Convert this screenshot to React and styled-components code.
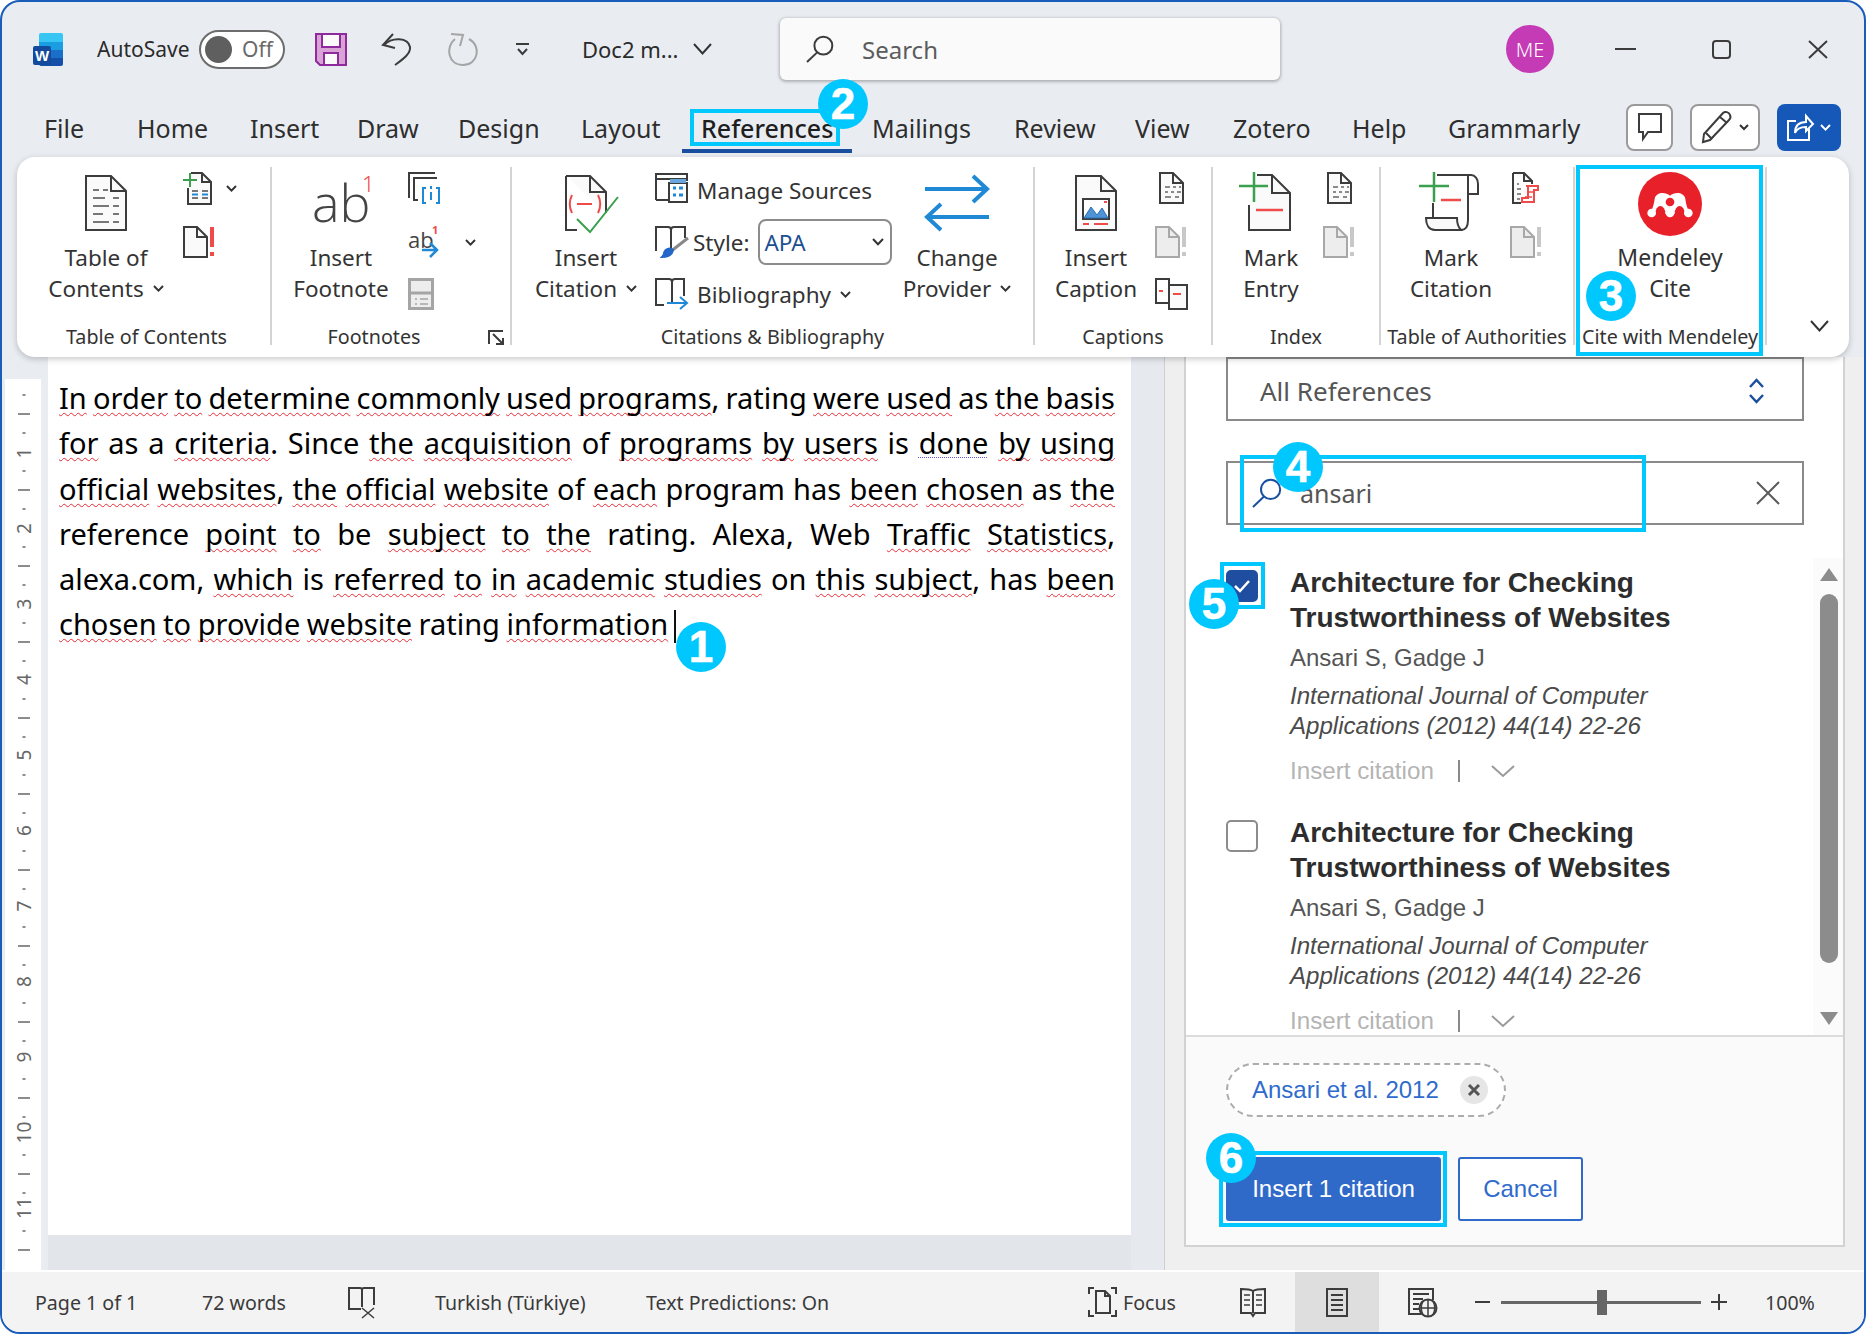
import React from 'react'
import styled, { createGlobalStyle } from 'styled-components'

const ink = '#3c3c3c'
const cyan = '#00c8ff'
const blue = '#2089d6'
const red = '#ef4b4b'
const green = '#3aa04e'

const GlobalStyle = createGlobalStyle`
  html, body { margin: 0; padding: 0; background: #fff; }
  * { box-sizing: border-box; }
`

const Stage = styled.div`
  position: relative;
  width: 1866px;
  height: 1334px;
  overflow: hidden;
  font-family: "Noto Sans", "Open Sans", sans-serif;
  color: #2b2b2b;
`

const Window = styled.div`
  display: flex;
  flex-direction: column;
  width: 100%;
  height: 100%;
  border: 2px solid #1a5cba;
  border-radius: 20px;
  overflow: hidden;
  background: #e9edf2;
`

const Cell = styled.div`
  display: flex;
  flex: none;
  align-items: center;
  margin-left: ${p => p.$ml || 0}px;
  width: ${p => (p.$w ? `${p.$w}px` : 'auto')};
  white-space: nowrap;
`

const TitleBar = styled.div`
  display: flex;
  flex: none;
  align-items: center;
  height: 96px;
  padding-bottom: 2px;
  font-size: 21px;
`

const Toggle = styled.div`
  display: flex;
  align-items: center;
  width: 86px;
  height: 39px;
  padding-left: 4px;
  border: 2px solid #6c6c6c;
  border-radius: 20px;
  background: #fff;
  font-size: 21px;
  color: #6a6a6a;
`

const Knob = styled.span`
  width: 27px;
  height: 27px;
  margin-right: 10px;
  border-radius: 50%;
  background: #5f5f5f;
`

const DocName = styled.span`
  font-size: 22px;
`

const SearchBox = styled.div`
  display: flex;
  align-items: center;
  width: 500px;
  height: 62px;
  padding-left: 26px;
  border-radius: 6px;
  background: #fafafa;
  box-shadow: 0 1px 3px 1px rgba(0, 0, 0, 0.25);
  font-size: 24px;
  color: #5c5c5c;
`

const SearchText = styled.span`
  margin-left: 28px;
`

const Avatar = styled.div`
  display: flex;
  align-items: center;
  justify-content: center;
  width: 48px;
  height: 48px;
  border-radius: 50%;
  background: #c43bb5;
  color: #fff;
  font-size: 20px;
  font-weight: 300;
`

const TabRow = styled.div`
  display: flex;
  flex: none;
  align-items: center;
  height: 59px;
  padding: 0 23px 0 42px;
`

const Tab = styled.div`
  position: relative;
  flex: none;
  width: ${p => p.$w}px;
  font-size: 25px;
  line-height: 36px;
  font-weight: ${p => (p.$active ? 500 : 400)};
  color: ${p => (p.$active ? '#1e1e1e' : '#2e2e2e')};

  ${p => p.$active && `
    &::after {
      content: "";
      position: absolute;
      left: -19px;
      width: 170px;
      top: calc(100% + 3px);
      height: 4px;
      background: #1a4fa0;
    }
  `}
`

const TabActions = styled.div`
  display: flex;
  gap: 17px;
  margin: -1px 0 0 auto;
`

const ActionButton = styled.div`
  display: flex;
  align-items: center;
  justify-content: center;
  gap: 7px;
  width: ${p => p.$w}px;
  height: 47px;
  border: ${p => (p.$primary ? 'none' : '2px solid #9a9a9a')};
  border-radius: 8px;
  background: ${p => (p.$primary ? '#1558b8' : '#fff')};
`

const Ribbon = styled.div`
  position: relative;
  z-index: 2;
  display: flex;
  flex: none;
  height: 200px;
  margin: 0 15px;
  padding: 10px 0 12px;
  border-radius: 18px;
  background: #fff;
  box-shadow: 0 2px 6px rgba(0, 0, 0, 0.22);
`

const Group = styled.div`
  display: grid;
  grid-template-rows: 1fr 26px;
  flex: none;
  width: ${p => p.$w}px;
  border-right: ${p => (p.$plain ? 'none' : '2px solid #d4d4d4')};
`

const GroupBody = styled.div`
  display: flex;
  padding-left: ${p => p.$pl || 0}px;
`

const GroupLabel = styled.div`
  position: relative;
  height: 26px;
  margin: 5px 0 -5px;
  padding: 0 ${p => p.$pr || 0}px 0 ${p => p.$pl || 0}px;
  font-size: 19.7px;
  line-height: 26px;
  text-align: center;
  white-space: nowrap;
  color: #333;
`

const Launcher = styled.span`
  position: absolute;
  right: 6px;
  bottom: 5px;
`

const BigButton = styled.div`
  display: flex;
  flex: none;
  flex-direction: column;
  align-items: center;
  width: ${p => p.$w}px;
  padding-top: 8px;
`

const BigIcon = styled.div`
  display: flex;
  justify-content: center;
  height: 67px;
  margin-left: ${p => p.$shift || 0}px;
  margin-top: ${p => p.$lift || 0}px;
  margin-bottom: ${p => -(p.$lift || 0)}px;
`

const BigLabel = styled.div`
  display: flex;
  align-items: center;
  gap: 9px;
  font-size: 22.5px;
  line-height: 31px;
  white-space: nowrap;
  color: #333;
`

const SmallColumn = styled.div`
  display: grid;
  grid-template-rows: 42px 66px 38px;
  flex: none;
  width: ${p => p.$w}px;
  padding-left: ${p => p.$pl || 0}px;
`

const SmallRow = styled.div`
  display: flex;
  align-items: center;
  justify-content: ${p => (p.$center ? 'center' : 'flex-start')};
  gap: ${p => p.$gap || 0}px;
  font-size: 22.5px;
  white-space: nowrap;
  color: #333;
`

const ManageLabel = styled.span`
  margin-top: 4px;
`

const StyleSelect = styled.div`
  display: flex;
  align-items: center;
  justify-content: space-between;
  width: 134px;
  height: 46px;
  margin-left: 5px;
  padding: 0 6px 0 4px;
  border: 2px solid #8c8c8c;
  border-radius: 8px;
  font-size: 22.5px;
  color: #1c4f91;
`

const LogoLabel = styled.span`
  font-size: 23px;
`

const RibbonCollapse = styled.div`
  display: flex;
  align-items: flex-end;
  justify-content: center;
  flex: 1;
  padding: 0 0 14px 22px;
`

const Content = styled.div`
  display: flex;
  flex: 1;
  min-height: 0;
`

const RulerStrip = styled.div`
  flex: none;
  width: 46px;
  padding: 22px 7px 0 3px;
  background: #e9edf2;
`

const RulerBody = styled.div`
  height: 100%;
  background: #fff;
`

const DocColumn = styled.div`
  display: flex;
  flex: none;
  flex-direction: column;
  width: 1083px;
`

const Page = styled.div`
  flex: 1;
  padding: 18px 16px 0 11px;
  background: #fff;
`

const PageFoot = styled.div`
  flex: none;
  height: 35px;
  background: #e2e5ea;
`

const Line = styled.div`
  height: 45.3px;
  font-family: "Noto Sans", sans-serif;
  font-size: 29px;
  line-height: 45.3px;
  word-spacing: ${p => (p.$last ? -1 : -3)}px;
  white-space: nowrap;
  text-align: justify;
  text-align-last: ${p => (p.$last ? 'left' : 'justify')};
  color: #000;
`

const Word = styled.span`
  text-decoration: ${p => (p.$mark === '~' ? 'underline wavy #ea2b35' : p.$mark === '^' ? 'underline dotted #6a5acd' : 'none')};
  text-decoration-thickness: 1.4px;
  text-underline-offset: 3px;
  text-decoration-skip-ink: none;
`

const Caret = styled.span`
  display: inline-block;
  width: 2px;
  height: 33px;
  margin-left: 6px;
  vertical-align: -8px;
  background: #111;
`

const Gutter = styled.div`
  flex: none;
  width: 34px;
  background: #e6e9ee;
  border-right: 1px solid #cfcfcf;
`

const Side = styled.div`
  display: flex;
  flex: 1;
  min-width: 0;
  padding: 0 19px 23px 19px;
  background: #efefef;
`

const Panel = styled.div`
  display: flex;
  flex-direction: column;
  width: 661px;
  border: solid #d2d2d2;
  border-width: 0 2px 2px 2px;
  background: #fff;
  font-family: "Liberation Sans", Arial, sans-serif;
`

const Filters = styled.div`
  flex: none;
  padding: 0 39px 0 40px;
`

const FilterBox = styled.div`
  display: flex;
  align-items: center;
  justify-content: space-between;
  height: 64px;
  margin-bottom: 40px;
  padding: ${p => (p.$search ? '0 22px 0 24px' : '3px 37px 0 32px')};
  border: 2px solid #8a8a8a;
  font-family: "Noto Sans", sans-serif;
  font-size: 26px;
  color: #555;

  &:last-child {
    margin-bottom: 0;
    font-size: 25px;
  }
`

const SearchValue = styled.div`
  display: flex;
  align-items: center;
  gap: 18px;
`

const ListArea = styled.div`
  display: flex;
  flex: 1;
  min-height: 0;
  margin-top: 33px;
  overflow: hidden;
`

const Items = styled.div`
  flex: 1;
  padding: 7px 0 0 40px;
`

const Item = styled.div`
  display: grid;
  grid-template-columns: 64px 1fr;
  height: 250px;
`

const CheckBox = styled.div`
  display: flex;
  align-items: center;
  justify-content: center;
  width: 32px;
  height: 32px;
  margin-top: 5px;
  border: 2px solid ${p => (p.$on ? '#1f4ea1' : '#8c8c8c')};
  border-radius: 5px;
  background: ${p => (p.$on ? '#1f4ea1' : '#fff')};
`

const ItemTitle = styled.div`
  font-size: 28px;
  line-height: 35px;
  font-weight: 700;
  color: #2d2d2d;
`

const ItemAuthors = styled.div`
  margin-top: 8px;
  font-size: 24px;
  line-height: 30px;
  color: #555;
`

const ItemJournal = styled.div`
  margin-top: 8px;
  font-size: 24.1px;
  line-height: 30px;
  font-style: italic;
  color: #4a4a4a;
`

const ItemActions = styled.div`
  display: flex;
  align-items: center;
  height: 30px;
  margin-top: 15px;
  font-size: 24.2px;
  color: #b4b4b4;
`

const ActionRule = styled.span`
  width: 2px;
  height: 22px;
  margin: 0 31px 0 24px;
  background: #8a8a8a;
`

const ScrollTrack = styled.div`
  display: flex;
  flex: none;
  flex-direction: column;
  width: 30px;
  padding: 10px 5px 10px 7px;
  background: #fbfbfb;
`

const ScrollThumb = styled.div`
  height: 369px;
  margin-top: 13px;
  border-radius: 9px;
  background: #8c8c8c;
`

const ScrollDown = styled.div`
  margin-top: auto;
`

const Footer = styled.div`
  flex: none;
  height: 210px;
  padding: 26px 40px;
  border-top: 2px solid #dcdcdc;
  background: #fafafa;
`

const Chip = styled.div`
  display: flex;
  align-items: center;
  justify-content: space-between;
  width: 280px;
  height: 54px;
  padding: 0 16px 0 24px;
  border: 2px dashed #acacac;
  border-radius: 27px;
  background: #fff;
  font-size: 24px;
  color: #2f6bcc;
`

const ChipClose = styled.span`
  display: flex;
  align-items: center;
  justify-content: center;
  width: 28px;
  height: 28px;
  border-radius: 50%;
  background: #e6e6e6;
`

const FooterActions = styled.div`
  display: flex;
  gap: 17px;
  margin-top: 40px;
`

const Button = styled.div`
  display: flex;
  align-items: center;
  justify-content: center;
  width: ${p => p.$w}px;
  height: 64px;
  border: 2px solid #306ac9;
  border-radius: 3px;
  background: ${p => (p.$primary ? '#306ac9' : '#fff')};
  color: ${p => (p.$primary ? '#fff' : '#2f6bcc')};
  font-size: 24px;
`

const StatusBar = styled.div`
  display: flex;
  flex: none;
  align-items: stretch;
  height: 62px;
  border-top: 2px solid #fff;
  background: #f3f3f3;
  font-size: 19.6px;
  color: #3a3a3a;
`

const ViewActive = styled(Cell)`
  justify-content: center;
  background: #dedede;
`

const ZoomSlider = styled.div`
  position: relative;
  align-self: center;
  width: 200px;
  height: 3px;
  background: #666;
`

const ZoomThumb = styled.span`
  position: absolute;
  left: 96px;
  top: -11px;
  width: 10px;
  height: 25px;
  background: #666;
`

const Highlight = styled.div`
  position: absolute;
  z-index: 5;
  left: ${p => p.$x}px;
  top: ${p => p.$y}px;
  width: ${p => p.$w}px;
  height: ${p => p.$h}px;
  border: 4px solid ${cyan};
`

const Badge = styled.div`
  position: absolute;
  z-index: 6;
  left: ${p => p.$x - 25}px;
  top: ${p => p.$y - 25}px;
  display: flex;
  align-items: center;
  justify-content: center;
  width: 50px;
  height: 50px;
  border-radius: 50%;
  background: ${cyan};
  color: #fff;
  font-family: "Liberation Sans", Arial, sans-serif;
  font-size: 44px;
  font-weight: 700;
  -webkit-text-stroke: 0.6px #fff;
`

const Glyph = styled.svg`
  display: block;
  flex: none;
  overflow: visible;
`

const Ico = ({ w, h, color = ink, sw = 2, children }) => (
  <Glyph width={w} height={h} viewBox={`0 0 ${w} ${h}`} fill="none" stroke={color} strokeWidth={sw}>
    {children}
  </Glyph>
)

const Chev = ({ w = 12, color = '#333', sw = 2 }) => (
  <Ico w={w} h={w * 0.6} color={color} sw={sw}>
    <path d={`M1 1L${w / 2} ${w * 0.6 - 1}L${w - 1} 1`} />
  </Ico>
)

const WordLogo = () => (
  <Glyph width="30" height="33" viewBox="0 0 30 33">
    <path d="M6 2C6 .9 6.900 0 8 0h20c1 0 2 .9 2 2v7H6z" fill="#37c6f4" />
    <rect x="6" y="9" width="24" height="8" fill="#1b9de2" />
    <rect x="6" y="17" width="24" height="8" fill="#1a6fc9" />
    <path d="M6 25h24v6c0 1-1 2-2 2H8c-1 0-2-1-2-2z" fill="#144fa8" />
    <rect x="0" y="13" width="18" height="19" rx="2" fill="#134a9e" />
    <text x="9" y="28" textAnchor="middle" fontFamily="Liberation Sans" fontSize="15" fontWeight="700" fill="#fff">W</text>
  </Glyph>
)

const SaveIcon = () => (
  <Ico w={32} h={33} color="#8e2a9e">
    <path d="M1 1H31V32H5L1 28Z" fill="#d9a3d6" />
    <rect x="7" y="1" width="18" height="13" fill="#fafafa" />
    <rect x="9" y="20" width="14" height="12" fill="#fafafa" />
  </Ico>
)

const UndoIcon = () => (
  <Ico w={30} h={32}>
    <path d="M11 1L1 12L13 15" />
    <path d="M2 12C10 4 26 4 28 14C29 21 20 27 13 32" />
  </Ico>
)

const RedoIcon = () => (
  <Ico w={33} h={33} color="#a5a5a5">
    <path d="M8 6C-2 14 1 32 16 32C31 32 35 13 22 6" />
    <path d="M4 1L16 2L13 13" />
  </Ico>
)

const QatMore = () => (
  <Ico w={15} h={13}>
    <path d="M1 1H14" />
    <path d="M3 6L7.500 11L12 6" />
  </Ico>
)

const SearchGlass = ({ color = ink, w = 28 }) => (
  <Ico w={w} h={w} color={color}>
    <circle cx={w * 0.62} cy={w * 0.38} r={w * 0.32} />
    <path d={`M${w * 0.4} ${w * 0.62}L1 ${w - 1}`} />
  </Ico>
)

const MinIcon = () => <Ico w={21} h={4}><path d="M0 2H21" /></Ico>

const MaxIcon = () => <Ico w={19} h={19}><rect x="1" y="1" width="17" height="17" rx="3" /></Ico>

const CloseIcon = () => <Ico w={20} h={19}><path d="M1 1L19 18M19 1L1 18" /></Ico>

const CommentIcon = () => (
  <Ico w={24} h={28}>
    <path d="M1 1H23V19H10L5 26V19H1Z" />
  </Ico>
)

const PencilIcon = () => (
  <Ico w={30} h={32}>
    <path d="M2 23L21 2C23 0 27 1 28 4C29 6 28 8 27 9L8 29L1 31Z" />
    <path d="M18 6L25 12M4 22L10 28" />
  </Ico>
)

const ShareIcon = () => (
  <Ico w={26} h={28} color="#fff">
    <path d="M9 8H1V27H22V16" />
    <path d="M8 20C8 12 13 9 19 9V3L26 11L19 18V14C14 14 10 15 8 20Z" />
  </Ico>
)

const TocIcon = () => (
  <Ico w={42} h={56}>
    <path d="M1 1H26L41 16V55H1Z" fill="#fafafa" />
    <path d="M26 1V16H41" />
    <path d="M8 15H14M18 15H23M8 23H20M28 23H34M8 31H24M28 31H34M8 39H18M28 39H34M8 47H24M28 47H34" stroke="#777" />
  </Ico>
)

const AddTextIcon = () => (
  <Ico w={29} h={33}>
    <path d="M8 1H19L28 10V32H5V16" fill="#fafafa" />
    <path d="M19 1V10H28" />
    <path d="M9 19H15M19 19H25M9 26H15M19 26H25" stroke="#777" />
    <path d="M9 22.500H15M19 22.500H25" stroke={blue} />
    <path d="M7 1V15M0 8H14" stroke={green} />
  </Ico>
)

const BangIcon = ({ color = ink, bang = red, fill = '#fafafa' }) => (
  <Ico w={32} h={32} color={color}>
    <path d="M1 1H14L24 11V31H1Z" fill={fill} />
    <path d="M14 1V11H24" />
    <path d="M29 1V21" stroke={bang} strokeWidth="4" />
    <path d="M29 26V30" stroke={bang} strokeWidth="4" />
  </Ico>
)

const AbIcon = () => (
  <Glyph width="62" height="60" viewBox="0 0 62 60">
    <text x="2" y="47" fontFamily="Open Sans" fontWeight="300" fontSize="52" fill="#444">ab</text>
    <text x="52" y="17" fontFamily="Noto Sans" fontWeight="300" fontSize="22" fill={red}>1</text>
  </Glyph>
)

const CrossRefIcon = () => (
  <Ico w={33} h={32}>
    <path d="M27 1H1V26" />
    <path d="M29 6H6V28H10" />
    <path d="M18 16H15V31H18M28 16H31V31H28" stroke={blue} />
    <path d="M23 14V17M23 20V28" stroke={blue} />
  </Ico>
)

const NextNoteIcon = () => (
  <Glyph width="32" height="32" viewBox="0 0 32 32">
    <text x="0" y="22" fontFamily="Open Sans" fontSize="22" fill="#444">ab</text>
    <text x="24" y="8" fontFamily="Noto Sans" fontSize="11" fontWeight="700" fill={red}>1</text>
    <path d="M14 24H29M22 17L29 24L22 31" fill="none" stroke={blue} strokeWidth="2.500" />
  </Glyph>
)

const ShowNotesIcon = () => (
  <Ico w={26} h={32} color="#a5a5a5" sw={3}>
    <rect x="1.500" y="1.500" width="23" height="29" fill="#ededed" />
    <path d="M1 15H25" />
    <path d="M7 21H9M12 21H20M7 26H9M12 26H20" strokeWidth="1.500" />
  </Ico>
)

const LauncherIcon = () => (
  <Ico w={16} h={15} sw={2}>
    <path d="M1 14V1H15" />
    <path d="M5 4L15 14M8 14H15V8" />
  </Ico>
)

const InsertCitationIcon = () => (
  <Ico w={55} h={58}>
    <path d="M1 1H25L41 17V38" fill="#fafafa" />
    <path d="M25 1V17H41" />
    <path d="M1 1V55H12" />
    <path d="M7 20C4 26 4 32 7 38M33 20C36 26 36 32 33 38" stroke={red} />
    <path d="M12 29H27" stroke={red} />
    <path d="M12 44L25 57L53 22" stroke={green} />
  </Ico>
)

const ManageIcon = () => (
  <Ico w={33} h={30}>
    <path d="M1 27V1H32V8M1 6H32M1 27H14" />
    <rect x="14" y="10" width="18" height="19" />
    <rect x="15" y="6" width="16" height="4" fill="#6aa6de" stroke="none" />
    <path d="M18 15H21M24 15H28M18 22H21M24 22H28" stroke={blue} strokeWidth="3" />
  </Ico>
)

const StyleIcon = () => (
  <Ico w={34} h={32}>
    <path d="M1 25V1H13C15 1 16 2 16 4V22M16 4C16 2 17 1 19 1H30V12" />
    <path d="M33 12L15 26" stroke="#888" strokeWidth="3" />
    <path d="M7 31C12 31 17 29 18 24C15 21 10 23 9 27C9 29 8 30 7 31Z" fill="#2467c9" stroke="#2467c9" />
  </Ico>
)

const BibliographyIcon = () => (
  <Ico w={33} h={32}>
    <path d="M9 27H1V1H14C16 1 17 2 17 4V24M17 4C17 2 18 1 20 1H29V18" />
    <path d="M12 25H31M25 19L32 25L25 31" stroke={blue} />
  </Ico>
)

const ProviderIcon = () => (
  <Ico w={64} h={56} color={blue} sw={4}>
    <path d="M0 14H62M48 1L62 14L48 27" />
    <path d="M64 42H2M16 29L2 42L16 55" />
  </Ico>
)

const CaptionIcon = () => (
  <Ico w={42} h={56}>
    <path d="M1 1H26L41 16V55H1Z" fill="#fafafa" />
    <path d="M26 1V16H41" />
    <rect x="8" y="24" width="26" height="20" stroke="#3c3c3c" fill="#fff" />
    <path d="M9 43L16 32L22 40L27 33L33 43Z" fill="#4d93d6" stroke="#2c6fb3" strokeWidth="1" />
    <path d="M8 49H14M19 49H33" stroke={red} strokeWidth="2" />
    <path d="M29 27H32" stroke={red} />
  </Ico>
)

const SmallDoc = ({ color = ink }) => (
  <Ico w={25} h={32} color={color}>
    <path d="M1 1H14L24 11V31H1Z" fill="#fafafa" />
    <path d="M14 1V11H24" />
    <path d="M6 15H11M14 15H17M20 15H22M6 20H9M12 20H15M18 20H22M6 25H12M16 25H20" strokeWidth="1.500" stroke="#666" />
  </Ico>
)

const TableFigIcon = () => (
  <Ico w={33} h={32}>
    <path d="M15 25H1V1H14V8" />
    <rect x="14" y="7" width="18" height="24" fill="#fafafa" />
    <path d="M4 13H8" stroke={red} />
    <path d="M18 16H26" stroke={red} />
  </Ico>
)

const MarkEntryIcon = () => (
  <Ico w={52} h={60}>
    <path d="M10 33V58H51V21L33 3H18" fill="#fafafa" />
    <path d="M33 3V21H51" />
    <path d="M15 0V30M0 14H29" stroke={green} strokeWidth="2.500" />
    <path d="M17 38H44" stroke={red} strokeWidth="2.500" />
  </Ico>
)

const MarkCitationIcon = () => (
  <Ico w={60} h={60}>
    <path d="M18 3H52C56 3 59 7 59 12V22H49" />
    <path d="M49 3V48C49 54 47 58 42 58H16" />
    <path d="M14 31V46" />
    <path d="M7 46H38C38 51 39 55 42 58H16C10 58 7 53 7 46Z" fill="#fafafa" />
    <path d="M15 0V30M0 14H30" stroke={green} strokeWidth="2.500" />
    <path d="M22 28H42" stroke={red} strokeWidth="2.500" />
  </Ico>
)

const TableAuthIcon = () => (
  <Ico w={28} h={33}>
    <path d="M1 1H12L20 9V12M1 1V31H9" fill="#fafafa" />
    <path d="M12 1V9H20" />
    <path d="M5 12H7M5 17H9M5 22H9M5 27H8" stroke="#666" strokeWidth="1.500" />
    <path d="M14 14H26V18H22V30H10V26H16V14" stroke={red} />
    <path d="M16 20H22M13 25H20" stroke={red} strokeWidth="1.500" />
  </Ico>
)

const MendeleyLogo = () => (
  <Glyph width="64" height="64" viewBox="54 32 192 192">
    <circle cx="150" cy="128" r="96" fill="#e8202a" />
    <path d="M88 158C100 140 102 125 104 112C108 93 135 90 150 103C165 90 192 93 196 112C198 125 200 140 212 158Z" fill="#fff" />
    <ellipse cx="121" cy="156" rx="15" ry="22" fill="#e8202a" />
    <ellipse cx="179" cy="156" rx="15" ry="22" fill="#e8202a" />
    <circle cx="95" cy="155" r="13" fill="#fff" />
    <circle cx="150" cy="155" r="13" fill="#fff" />
    <circle cx="205" cy="155" r="13" fill="#fff" />
    <circle cx="150" cy="122" r="13" fill="#e8202a" />
  </Glyph>
)

const UpDownIcon = () => (
  <Ico w={17} h={26} color="#1a4fa0" sw={2.5}>
    <path d="M2 9L8.500 2L15 9M2 17L8.500 24L15 17" />
  </Ico>
)

const CheckMark = () => (
  <Ico w={18} h={14} color="#fff" sw={2.5}>
    <path d="M2 7L7 12L16 2" />
  </Ico>
)

const Thin = ({ w = 24, h = 12, color = '#9a9a9a' }) => (
  <Ico w={w} h={h} color={color}>
    <path d={`M1 1L${w / 2} ${h - 1}L${w - 1} 1`} />
  </Ico>
)

const ArrowTri = ({ down }) => (
  <Glyph width="18" height="13" viewBox="0 0 18 13">
    <path d={down ? 'M0 0H18L9 13Z' : 'M9 0L18 13H0Z'} fill="#8c8c8c" />
  </Glyph>
)

const ProofIcon = () => (
  <Ico w={27} h={31}>
    <path d="M13 22H1V1H12C13 1 14 2 14 3V20M14 3C14 2 15 1 16 1H26V18" />
    <path d="M14 21L26 31M26 21L14 31" strokeWidth="1.500" />
  </Ico>
)

const FocusIcon = () => (
  <Ico w={29} h={30}>
    <path d="M1 7V1H6M23 1H28V7M1 23V29H6M23 29H28V23" />
    <path d="M8 4H17L22 9V26H8Z" />
    <path d="M17 4V9H22" />
  </Ico>
)

const BookIcon = () => (
  <Ico w={26} h={30}>
    <path d="M13 4C10 2 5 2 1 2V26H11L13 29L15 26H25V2C21 2 16 2 13 4ZM13 4V26" />
    <path d="M4 8H10M4 13H10M4 18H10M16 8H22M16 13H22M16 18H22" strokeWidth="1.500" />
  </Ico>
)

const PrintViewIcon = () => (
  <Ico w={22} h={29}>
    <rect x="1" y="1" width="20" height="27" />
    <path d="M5 7H17M5 12H17M5 17H17M5 22H17" />
  </Ico>
)

const WebViewIcon = () => (
  <Ico w={29} h={29}>
    <path d="M13 26H1V1H25V12" />
    <path d="M5 6H21M5 11H15M5 16H11M5 21H11" />
    <circle cx="20" cy="20" r="8.500" />
    <path d="M11 20H29M20 11V29M15 13C13 17 13 23 15 27M25 13C27 17 27 23 25 27" strokeWidth="1.500" />
  </Ico>
)

const Ruler = () => {
  const ticks = []
  for (let i = 0; i < 47; i++) {
    const y = 19 * i - 3
    const kind = i % 4
    if (kind === 0) continue
    const half = kind === 2 ? 6 : 1.5
    ticks.push(<path key={i} d={`M${19 - half} ${y}H${19 + half}`} />)
  }
  const numbers = Array.from({ length: 11 }, (_, i) => i + 1)
  return (
    <Glyph width="36" height="891" viewBox="0 0 36 891" stroke="#666" strokeWidth="1.500">
      {ticks}
      {numbers.map(n => {
        const y = 74 + 75.5 * (n - 1)
        return (
          <text key={n} x="19" y={y + 7} textAnchor="middle" stroke="none" fill="#666" fontSize="19" fontFamily="Noto Sans" transform={`rotate(-90 19 ${y})`}>{n}</text>
        )
      })}
    </Glyph>
  )
}

const tabs = [
  ['File', 93], ['Home', 113], ['Insert', 107], ['Draw', 101], ['Design', 123], ['Layout', 120],
  ['References', 171, true], ['Mailings', 142], ['Review', 121], ['View', 98], ['Zotero', 119], ['Help', 96], ['Grammarly', 160],
]

const docLines = [
  '~In ~order ~to ~determine ~commonly ~used ~programs, rating ~were ~used as ~the ~basis',
  '~for as a ~criteria. Since ~the ~acquisition of ~programs ~by ~users is ^done ~by ~using',
  '~official ~websites, ~the ~official ~website of ~each program has ~been ~chosen as ~the',
  'reference ~point ~to be ~subject ~to ~the rating. Alexa, Web ~Traffic ~Statistics,',
  'alexa.com, ~which is ~referred ~to ~in ~academic ~studies on ~this ~subject, has ~been',
  '~chosen ~to ~provide ~website rating ~information',
]

const DocLine = ({ text, last }) => {
  const tokens = text.split(' ')
  return (
    <Line $last={last}>
      {tokens.map((token, i) => {
        const [, mark, word, tail] = token.match(/^([~^]?)(.*?)([.,]?)$/)
        return (
          <React.Fragment key={i}>
            <Word $mark={mark}>{word}</Word>{tail}{i < tokens.length - 1 ? ' ' : ''}
          </React.Fragment>
        )
      })}
      {last && <Caret />}
    </Line>
  )
}

const Reference = ({ checked }) => (
  <Item>
    <CheckBox $on={checked}>{checked && <CheckMark />}</CheckBox>
    <div>
      <ItemTitle>Architecture for Checking<br />Trustworthiness of Websites</ItemTitle>
      <ItemAuthors>Ansari S, Gadge J</ItemAuthors>
      <ItemJournal>International Journal of Computer<br />Applications (2012) 44(14) 22-26</ItemJournal>
      <ItemActions>
        Insert citation
        <ActionRule />
        <Thin />
      </ItemActions>
    </div>
  </Item>
)

const App = () => (
  <>
    <GlobalStyle />
    <Stage>
      <Window>
        <TitleBar>
          <Cell $ml={31} $w={30}><WordLogo /></Cell>
          <Cell $ml={34} $w={102}>AutoSave</Cell>
          <Cell $w={86}><Toggle><Knob />Off</Toggle></Cell>
          <Cell $ml={30} $w={32}><SaveIcon /></Cell>
          <Cell $ml={35} $w={30}><UndoIcon /></Cell>
          <Cell $ml={35} $w={33}><RedoIcon /></Cell>
          <Cell $ml={35} $w={15}><QatMore /></Cell>
          <Cell $ml={52} $w={111}><DocName>Doc2 m...</DocName></Cell>
          <Cell $w={19}><Chev w={19} sw={2} /></Cell>
          <Cell $ml={68}>
            <SearchBox><SearchGlass /><SearchText>Search</SearchText></SearchBox>
          </Cell>
          <Cell $ml={226} $w={48}><Avatar>ME</Avatar></Cell>
          <Cell $ml={61} $w={21}><MinIcon /></Cell>
          <Cell $ml={76} $w={19}><MaxIcon /></Cell>
          <Cell $ml={77} $w={20}><CloseIcon /></Cell>
        </TitleBar>

        <TabRow>
          {tabs.map(([label, w, active]) => (
            <Tab key={label} $w={w} $active={active}>{label}</Tab>
          ))}
          <TabActions>
            <ActionButton $w={47}><CommentIcon /></ActionButton>
            <ActionButton $w={70}><PencilIcon /><Chev w={10} /></ActionButton>
            <ActionButton $w={64} $primary><ShareIcon /><Chev w={11} color="#fff" /></ActionButton>
          </TabActions>
        </TabRow>

        <Ribbon>
          <Group $w={255}>
            <GroupBody $pl={14}>
              <BigButton $w={150}>
                <BigIcon><TocIcon /></BigIcon>
                <BigLabel>Table of</BigLabel>
                <BigLabel>Contents <Chev w={11} /></BigLabel>
              </BigButton>
              <SmallColumn $w={80} $pl={2}>
                <SmallRow $gap={14}><AddTextIcon /><Chev w={11} /></SmallRow>
                <SmallRow><BangIcon /></SmallRow>
                <SmallRow />
              </SmallColumn>
            </GroupBody>
            <GroupLabel $pl={6}>Table of Contents</GroupLabel>
          </Group>

          <Group $w={240}>
            <GroupBody $pl={9}>
              <BigButton $w={120}>
                <BigIcon><AbIcon /></BigIcon>
                <BigLabel>Insert</BigLabel>
                <BigLabel>Footnote</BigLabel>
              </BigButton>
              <SmallColumn $w={90} $pl={7}>
                <SmallRow><CrossRefIcon /></SmallRow>
                <SmallRow $gap={25}><NextNoteIcon /><Chev w={11} /></SmallRow>
                <SmallRow><ShowNotesIcon /></SmallRow>
              </SmallColumn>
            </GroupBody>
            <GroupLabel $pr={34}>
              Footnotes
              <Launcher><LauncherIcon /></Launcher>
            </GroupLabel>
          </Group>

          <Group $w={523}>
            <GroupBody $pl={9}>
              <BigButton $w={130}>
                <BigIcon $shift={12}><InsertCitationIcon /></BigIcon>
                <BigLabel>Insert</BigLabel>
                <BigLabel>Citation <Chev w={11} /></BigLabel>
              </BigButton>
              <SmallColumn $w={241} $pl={4}>
                <SmallRow $gap={9}><ManageIcon /><ManageLabel>Manage Sources</ManageLabel></SmallRow>
                <SmallRow $gap={4}>
                  <StyleIcon />Style:
                  <StyleSelect>APA <Chev w={12} /></StyleSelect>
                </SmallRow>
                <SmallRow $gap={9}><BibliographyIcon />Bibliography <Chev w={11} /></SmallRow>
              </SmallColumn>
              <BigButton $w={130}>
                <BigIcon><ProviderIcon /></BigIcon>
                <BigLabel>Change</BigLabel>
                <BigLabel>Provider <Chev w={11} /></BigLabel>
              </BigButton>
            </GroupBody>
            <GroupLabel>Citations &amp; Bibliography</GroupLabel>
          </Group>

          <Group $w={178}>
            <GroupBody $pl={6}>
              <BigButton $w={110}>
                <BigIcon><CaptionIcon /></BigIcon>
                <BigLabel>Insert</BigLabel>
                <BigLabel>Caption</BigLabel>
              </BigButton>
              <SmallColumn $w={40}>
                <SmallRow $center><SmallDoc /></SmallRow>
                <SmallRow $center><BangIcon color="#a8a8a8" bang="#c8c8c8" fill="#ededed" /></SmallRow>
                <SmallRow $center><TableFigIcon /></SmallRow>
              </SmallColumn>
            </GroupBody>
            <GroupLabel>Captions</GroupLabel>
          </Group>

          <Group $w={168}>
            <GroupBody $pl={13}>
              <BigButton $w={90}>
                <BigIcon $shift={-13} $lift={-3}><MarkEntryIcon /></BigIcon>
                <BigLabel>Mark</BigLabel>
                <BigLabel>Entry</BigLabel>
              </BigButton>
              <SmallColumn $w={46}>
                <SmallRow $center><SmallDoc /></SmallRow>
                <SmallRow $center><BangIcon color="#a8a8a8" bang="#c8c8c8" fill="#ededed" /></SmallRow>
                <SmallRow />
              </SmallColumn>
            </GroupBody>
            <GroupLabel>Index</GroupLabel>
          </Group>

          <Group $w={194}>
            <GroupBody $pl={15}>
              <BigButton $w={110}>
                <BigIcon $shift={-5} $lift={-3}><MarkCitationIcon /></BigIcon>
                <BigLabel>Mark</BigLabel>
                <BigLabel>Citation</BigLabel>
              </BigButton>
              <SmallColumn $w={40}>
                <SmallRow $center><TableAuthIcon /></SmallRow>
                <SmallRow $center><BangIcon color="#a8a8a8" bang="#c8c8c8" fill="#ededed" /></SmallRow>
                <SmallRow />
              </SmallColumn>
            </GroupBody>
            <GroupLabel>Table of Authorities</GroupLabel>
          </Group>

          <Group $w={192}>
            <GroupBody>
              <BigButton $w={190}>
                <BigIcon $lift={-3}><MendeleyLogo /></BigIcon>
                <BigLabel><LogoLabel>Mendeley</LogoLabel></BigLabel>
                <BigLabel><LogoLabel>Cite</LogoLabel></BigLabel>
              </BigButton>
            </GroupBody>
            <GroupLabel>Cite with Mendeley</GroupLabel>
          </Group>

          <RibbonCollapse><Chev w={19} /></RibbonCollapse>
        </Ribbon>

        <Content>
          <RulerStrip><RulerBody><Ruler /></RulerBody></RulerStrip>
          <DocColumn>
            <Page>
              {docLines.map((text, i) => (
                <DocLine key={i} text={text} last={i === docLines.length - 1} />
              ))}
            </Page>
            <PageFoot />
          </DocColumn>
          <Gutter />
          <Side>
            <Panel>
              <Filters>
                <FilterBox>All References <UpDownIcon /></FilterBox>
                <FilterBox $search>
                  <SearchValue><SearchGlass color="#1a4fa0" w={30} />ansari</SearchValue>
                  <Ico w={24} h={24} color="#5a5a5a"><path d="M1 1L23 23M23 1L1 23" /></Ico>
                </FilterBox>
              </Filters>
              <ListArea>
                <Items>
                  <Reference checked />
                  <Reference />
                </Items>
                <ScrollTrack>
                  <ArrowTri />
                  <ScrollThumb />
                  <ScrollDown><ArrowTri down /></ScrollDown>
                </ScrollTrack>
              </ListArea>
              <Footer>
                <Chip>
                  Ansari et al. 2012
                  <ChipClose>
                    <Ico w={12} h={12} color="#555" sw={3}><path d="M1 1L11 11M11 1L1 11" /></Ico>
                  </ChipClose>
                </Chip>
                <FooterActions>
                  <Button $primary $w={215}>Insert 1 citation</Button>
                  <Button $w={125}>Cancel</Button>
                </FooterActions>
              </Footer>
            </Panel>
          </Side>
        </Content>

        <StatusBar>
          <Cell $ml={33} $w={167}>Page 1 of 1</Cell>
          <Cell $w={146}>72 words</Cell>
          <Cell $w={27}><ProofIcon /></Cell>
          <Cell $ml={60} $w={211}>Turkish (Türkiye)</Cell>
          <Cell $w={442}>Text Predictions: On</Cell>
          <Cell $w={28}><FocusIcon /></Cell>
          <Cell $ml={7} $w={117}>Focus</Cell>
          <Cell $w={26}><BookIcon /></Cell>
          <ViewActive $ml={29} $w={84}><PrintViewIcon /></ViewActive>
          <Cell $ml={29} $w={28}><WebViewIcon /></Cell>
          <Cell $ml={39} $w={15}><Ico w={15} h={2}><path d="M0 1H15" /></Ico></Cell>
          <Cell $ml={11} $w={200}><ZoomSlider><ZoomThumb /></ZoomSlider></Cell>
          <Cell $ml={10} $w={16}><Ico w={16} h={16}><path d="M0 8H16M8 0V16" /></Ico></Cell>
          <Cell $ml={38}>100%</Cell>
        </StatusBar>
      </Window>

      <Highlight $x={690} $y={109} $w={150} $h={37} />
      <Highlight $x={1576} $y={165} $w={187} $h={191} />
      <Highlight $x={1240} $y={455} $w={406} $h={77} />
      <Highlight $x={1220} $y={562} $w={45} $h={47} />
      <Highlight $x={1219} $y={1151} $w={228} $h={76} />

      <Badge $x={701} $y={647}>1</Badge>
      <Badge $x={843} $y={104}>2</Badge>
      <Badge $x={1611} $y={296}>3</Badge>
      <Badge $x={1298} $y={467}>4</Badge>
      <Badge $x={1214} $y={604}>5</Badge>
      <Badge $x={1231} $y={1158}>6</Badge>
    </Stage>
  </>
)

export default App
